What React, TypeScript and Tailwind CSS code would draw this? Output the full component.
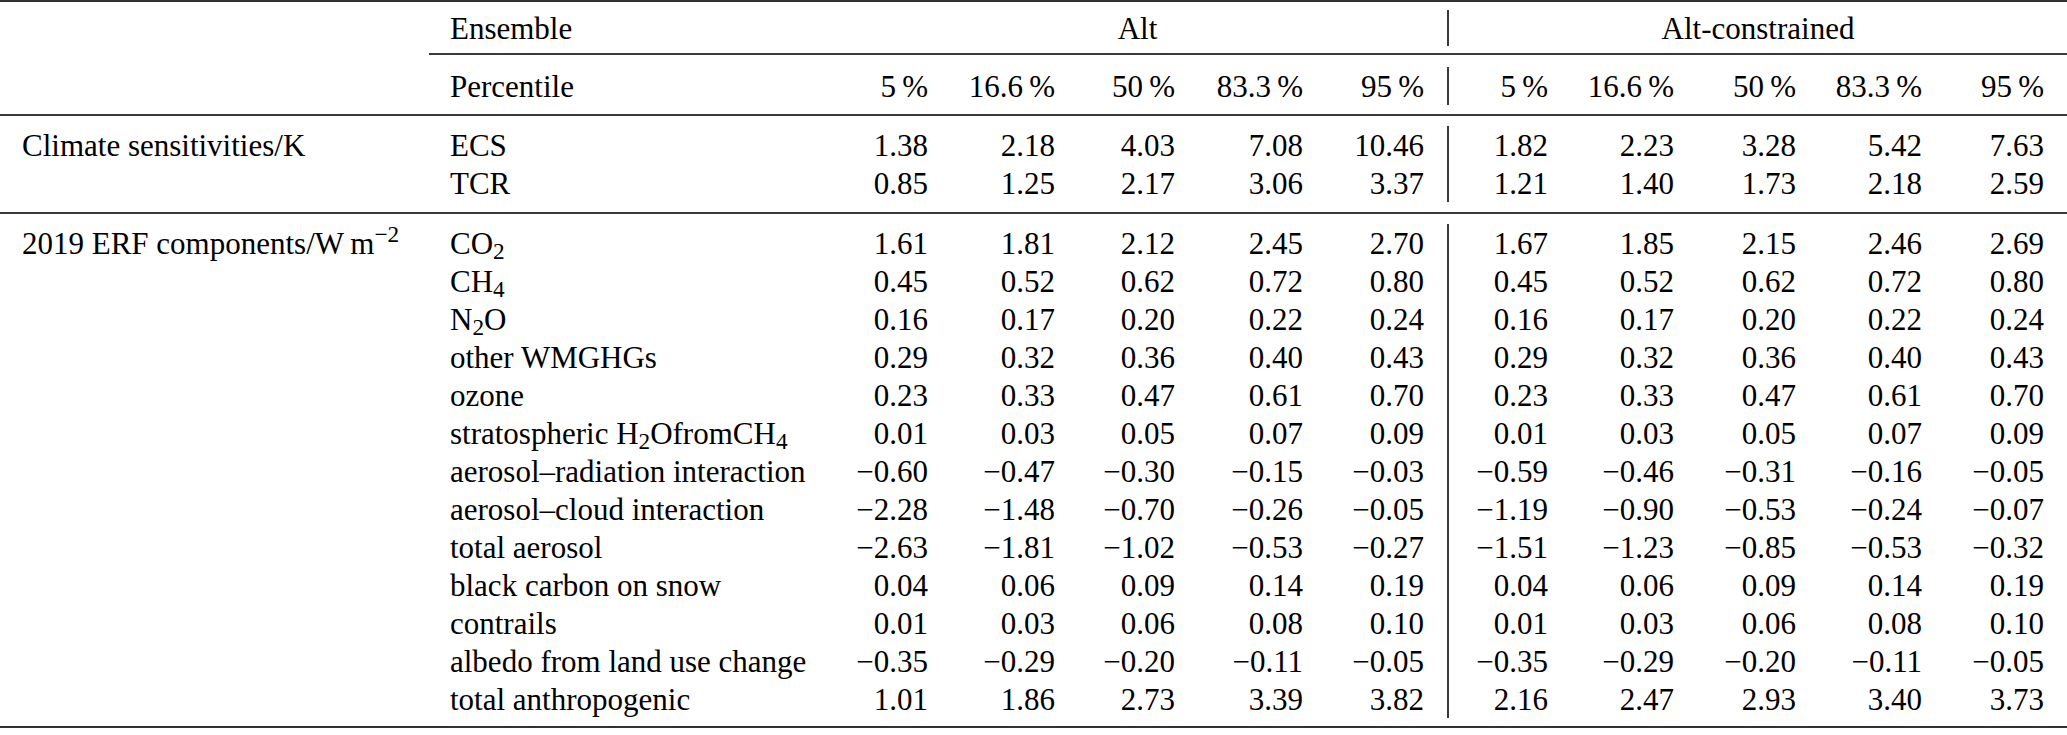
import type { ReactNode } from 'react';

// ── Column widths (px) ───────────────────────────────────────────────────────

const ALT_W = ['w-[123px]', 'w-[127px]', 'w-[120px]', 'w-[128px]', 'w-[121px]'];
const CON_W = ['w-[122px]', 'w-[126px]', 'w-[122px]', 'w-[126px]', 'w-[122px]'];

const PCT = ['5\u2009%', '16.6\u2009%', '50\u2009%', '83.3\u2009%', '95\u2009%'];

// ── Data ─────────────────────────────────────────────────────────────────────

type Ligne = { label: ReactNode; alt: string[]; con: string[] };

const sensibilites: Ligne[] = [
  { label: 'ECS', alt: ['1.38', '2.18', '4.03', '7.08', '10.46'], con: ['1.82', '2.23', '3.28', '5.42', '7.63'] },
  { label: 'TCR', alt: ['0.85', '1.25', '2.17', '3.06', '3.37'], con: ['1.21', '1.40', '1.73', '2.18', '2.59'] },
];

const m = '\u2212';

const erf: Ligne[] = [
  { label: <>CO<sub>2</sub></>, alt: ['1.61', '1.81', '2.12', '2.45', '2.70'], con: ['1.67', '1.85', '2.15', '2.46', '2.69'] },
  { label: <>CH<sub>4</sub></>, alt: ['0.45', '0.52', '0.62', '0.72', '0.80'], con: ['0.45', '0.52', '0.62', '0.72', '0.80'] },
  { label: <>N<sub>2</sub>O</>, alt: ['0.16', '0.17', '0.20', '0.22', '0.24'], con: ['0.16', '0.17', '0.20', '0.22', '0.24'] },
  { label: 'other WMGHGs', alt: ['0.29', '0.32', '0.36', '0.40', '0.43'], con: ['0.29', '0.32', '0.36', '0.40', '0.43'] },
  { label: 'ozone', alt: ['0.23', '0.33', '0.47', '0.61', '0.70'], con: ['0.23', '0.33', '0.47', '0.61', '0.70'] },
  { label: <>stratospheric H<sub>2</sub>OfromCH<sub>4</sub></>, alt: ['0.01', '0.03', '0.05', '0.07', '0.09'], con: ['0.01', '0.03', '0.05', '0.07', '0.09'] },
  { label: 'aerosol\u2013radiation interaction', alt: [m + '0.60', m + '0.47', m + '0.30', m + '0.15', m + '0.03'], con: [m + '0.59', m + '0.46', m + '0.31', m + '0.16', m + '0.05'] },
  { label: 'aerosol\u2013cloud interaction', alt: [m + '2.28', m + '1.48', m + '0.70', m + '0.26', m + '0.05'], con: [m + '1.19', m + '0.90', m + '0.53', m + '0.24', m + '0.07'] },
  { label: 'total aerosol', alt: [m + '2.63', m + '1.81', m + '1.02', m + '0.53', m + '0.27'], con: [m + '1.51', m + '1.23', m + '0.85', m + '0.53', m + '0.32'] },
  { label: 'black carbon on snow', alt: ['0.04', '0.06', '0.09', '0.14', '0.19'], con: ['0.04', '0.06', '0.09', '0.14', '0.19'] },
  { label: 'contrails', alt: ['0.01', '0.03', '0.06', '0.08', '0.10'], con: ['0.01', '0.03', '0.06', '0.08', '0.10'] },
  { label: 'albedo from land use change', alt: [m + '0.35', m + '0.29', m + '0.20', m + '0.11', m + '0.05'], con: [m + '0.35', m + '0.29', m + '0.20', m + '0.11', m + '0.05'] },
  { label: 'total anthropogenic', alt: ['1.01', '1.86', '2.73', '3.39', '3.82'], con: ['2.16', '2.47', '2.93', '3.40', '3.73'] },
];

// ── Ligne de tableau ─────────────────────────────────────────────────────────

function Row({ a, b, alt, con }: { a?: ReactNode; b: ReactNode; alt: ReactNode[]; con: ReactNode[] }) {
  return (
    <div className="flex h-[38px] items-center">
      <div className="w-[429px] shrink-0 pl-[22px] whitespace-nowrap">{a}</div>
      <div className="w-[399px] shrink-0 pl-[21px] whitespace-nowrap">{b}</div>
      {alt.map((v, i) => (
        <div key={i} className={`${ALT_W[i]} shrink-0 pr-[23px] text-right whitespace-nowrap`}>{v}</div>
      ))}
      <div className="w-[2px] self-stretch shrink-0 bg-[#3a3a3a]" />
      {con.map((v, i) => (
        <div key={i} className={`${CON_W[i]} shrink-0 pr-[23px] text-right whitespace-nowrap`}>{v}</div>
      ))}
    </div>
  );
}

function Rule({ partial = false }: { partial?: boolean }) {
  return (
    <div className="flex">
      {partial && <div className="w-[429px] shrink-0" />}
      <div className="h-[2px] flex-1 bg-[#3a3a3a]" />
    </div>
  );
}

// ── Composant principal ──────────────────────────────────────────────────────

export default function App() {
  return (
    <div className="w-[2067px] h-[735px] bg-white text-black text-[31px] leading-none font-[family-name:Liberation_Serif,Times_New_Roman,serif]">
      <div className="h-[2px] bg-[#333]" />

      <div className="pt-[8px] pb-[7px]">
        <div className="flex h-[36px] items-center">
          <div className="w-[429px] shrink-0" />
          <div className="w-[399px] shrink-0 pl-[21px]">Ensemble</div>
          <div className="w-[619px] shrink-0 text-center">Alt</div>
          <div className="w-[2px] self-stretch shrink-0 bg-[#3a3a3a]" />
          <div className="w-[618px] shrink-0 text-center">Alt-constrained</div>
        </div>
      </div>
      <Rule partial />

      <div className="pt-[12px] pb-[9px]">
        <Row b="Percentile" alt={PCT} con={PCT} />
      </div>
      <Rule />

      <div className="pt-[10px] pb-[10px]">
        {sensibilites.map((l, i) => (
          <Row key={i} a={i === 0 ? 'Climate sensitivities/K' : undefined} b={l.label} alt={l.alt} con={l.con} />
        ))}
      </div>
      <Rule />

      <div className="pt-[10px] pb-[8px]">
        {erf.map((l, i) => (
          <Row
            key={i}
            a={i === 0 ? <>2019 ERF components/W{'\u2009'}m<sup>{m}2</sup></> : undefined}
            b={l.label}
            alt={l.alt}
            con={l.con}
          />
        ))}
      </div>
      <div className="h-[2px] bg-[#333]" />
    </div>
  );
}
